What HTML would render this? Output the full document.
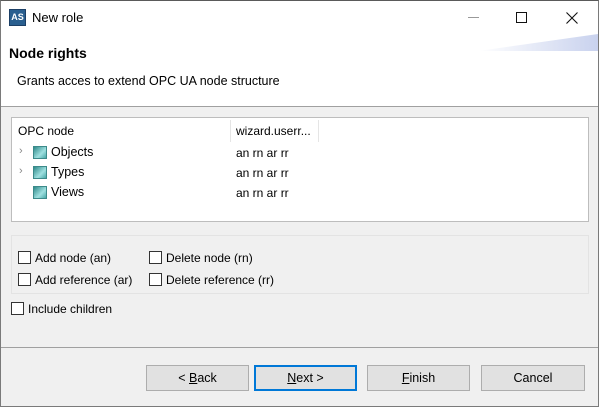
<!DOCTYPE html>
<html><head><style>
*{box-sizing:border-box;margin:0;padding:0}
body{width:599px;height:407px;overflow:hidden;font-family:"Liberation Sans",sans-serif;font-size:12px;color:#000;background:#f0f0f0;position:relative}
.win{position:absolute;left:0;top:0;width:599px;height:407px;border:1px solid #7a7a7a;border-top-color:#5a5a5a;background:#f0f0f0}
.abs{position:absolute}
.cb{position:absolute;width:13px;height:13px;border:1px solid #333;background:#fff}
.btn{position:absolute;top:364px;height:26px;border:1px solid #adadad;background:#e1e1e1;text-align:center;line-height:24px;font-size:12.5px}
.ico{position:absolute;width:14px;height:13px;background:linear-gradient(135deg,#2f8a8a,#9fe0e0 60%,#4aa9a9);border:1px solid #3d8a8a}
</style></head><body>
<div class="win">
 <div class="abs" style="left:0;top:0;width:597px;height:105px;background:#fff"></div>
 <div class="abs" style="left:477px;top:33px;width:120px;height:17px;background:linear-gradient(to right,rgba(200,210,240,0),#c9d2ee);clip-path:polygon(0 100%,100% 0,100% 100%)"></div>
 <div class="abs" style="left:8px;top:8px;width:17px;height:17px;background:#2a5f8f;border:1px solid #1c3f66;color:#fff;font-size:9px;font-weight:bold;line-height:15px;text-align:center">AS</div>
 <div class="abs" style="left:31px;top:9px;font-size:13px">New role</div>
 <div class="abs" style="left:467px;top:16px;width:11px;height:1px;background:#999"></div>
 <div class="abs" style="left:515px;top:11px;width:11px;height:11px;border:1px solid #111"></div>
 <svg class="abs" style="left:565px;top:11px" width="12" height="12"><path d="M0.5 0.5L11.5 11.5M11.5 0.5L0.5 11.5" stroke="#111" stroke-width="1.1"/></svg>
 <div class="abs" style="left:8px;top:44px;font-size:14px;font-weight:bold">Node rights</div>
 <div class="abs" style="left:16px;top:73px;font-size:12.5px">Grants acces to extend OPC UA node structure</div>
 <div class="abs" style="left:0;top:105px;width:597px;height:1px;background:#a0a0a0"></div>

 <div class="abs" style="left:10px;top:116px;width:578px;height:105px;background:#fff;border:1px solid #bdbdbd"></div>
 <div class="abs" style="left:229px;top:119px;width:1px;height:22px;background:#e5e5e5"></div>
 <div class="abs" style="left:317px;top:119px;width:1px;height:22px;background:#e5e5e5"></div>
 <div class="abs" style="left:17px;top:123px">OPC node</div>
 <div class="abs" style="left:235px;top:123px">wizard.userr...</div>
 <div class="abs" style="left:18px;top:144px;color:#888;font-size:11px">›</div>
 <div class="abs" style="left:18px;top:164px;color:#888;font-size:11px">›</div>
 <div class="ico" style="left:32px;top:145px"></div>
 <div class="ico" style="left:32px;top:165px"></div>
 <div class="ico" style="left:32px;top:185px"></div>
 <div class="abs" style="left:50px;top:144px;font-size:12.5px">Objects</div>
 <div class="abs" style="left:50px;top:164px;font-size:12.5px">Types</div>
 <div class="abs" style="left:50px;top:184px;font-size:12.5px">Views</div>
 <div class="abs" style="left:235px;top:145px">an rn ar rr</div>
 <div class="abs" style="left:235px;top:165px">an rn ar rr</div>
 <div class="abs" style="left:235px;top:185px">an rn ar rr</div>

 <div class="abs" style="left:10px;top:234px;width:578px;height:59px;border:1px solid #e3e3e3"></div>
 <div class="cb" style="left:17px;top:250px"></div><div class="abs" style="left:34px;top:250px">Add node (an)</div>
 <div class="cb" style="left:148px;top:250px"></div><div class="abs" style="left:165px;top:250px">Delete node (rn)</div>
 <div class="cb" style="left:17px;top:272px"></div><div class="abs" style="left:34px;top:272px">Add reference (ar)</div>
 <div class="cb" style="left:148px;top:272px"></div><div class="abs" style="left:165px;top:272px">Delete reference (rr)</div>
 <div class="cb" style="left:10px;top:301px"></div><div class="abs" style="left:27px;top:301px">Include children</div>

 <div class="abs" style="left:0;top:346px;width:597px;height:1px;background:#a0a0a0"></div>
 <div class="btn" style="left:145px;width:103px">&lt; <u>B</u>ack</div>
 <div class="btn" style="left:253px;width:103px;border:2px solid #0078d7;line-height:22px"><u>N</u>ext &gt;</div>
 <div class="btn" style="left:366px;width:103px"><u>F</u>inish</div>
 <div class="btn" style="left:480px;width:104px">Cancel</div>
</div>
</body></html>
